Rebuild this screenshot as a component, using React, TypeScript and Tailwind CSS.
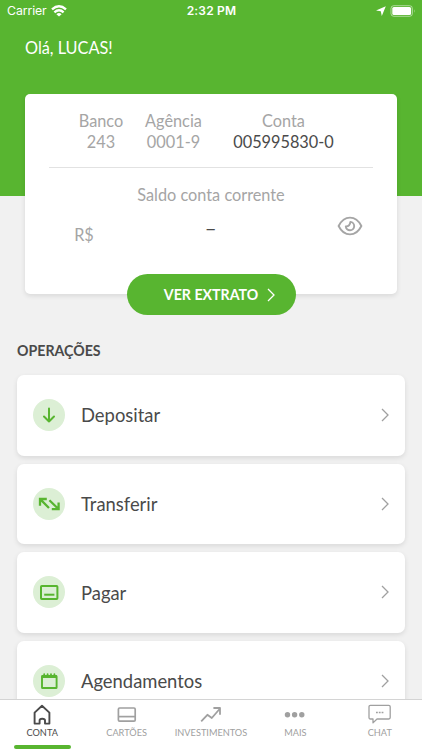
import type { ReactNode } from "react";

const operations: { label: string; icon: ReactNode }[] = [
  {
    label: "Depositar",
    icon: (
      <svg viewBox="0 0 32 32" fill="none" className="w-8 h-8">
        <path
          d="M16 9.5V22.5M11 17.5L16 22.5L21 17.5"
          stroke="currentColor"
          strokeWidth="2"
          strokeLinecap="round"
          strokeLinejoin="round"
        />
      </svg>
    ),
  },
  {
    label: "Transferir",
    icon: (
      <svg viewBox="0 0 32 32" fill="none" className="w-8 h-8">
        <path d="M7 17.8V11H13.8M7.4 11.4L16 20" stroke="currentColor" strokeWidth="2.3" />
        <path d="M25.6 14.4V21.2H18.8M25.2 20.8L16.4 12.2" stroke="currentColor" strokeWidth="2.3" />
      </svg>
    ),
  },
  {
    label: "Pagar",
    icon: (
      <svg viewBox="0 0 32 32" fill="none" className="w-8 h-8">
        <rect x="8" y="10" width="16.4" height="13" rx="0.8" stroke="currentColor" strokeWidth="2" />
        <path d="M11.2 18.7H21.4" stroke="currentColor" strokeWidth="2" />
      </svg>
    ),
  },
  {
    label: "Agendamentos",
    icon: (
      <svg viewBox="0 0 32 32" fill="none" className="w-8 h-8">
        <rect x="9" y="11" width="14.6" height="12" rx="0.6" stroke="currentColor" strokeWidth="1.9" />
        <path d="M8.6 11.6H24" stroke="currentColor" strokeWidth="2.8" />
        <path
          d="M11.2 11V9.2M14.6 11V9.2M18 11V9.2M21.4 11V9.2"
          stroke="currentColor"
          strokeWidth="1.8"
          strokeLinecap="round"
        />
      </svg>
    ),
  },
];

const tabs: { label: string; active?: boolean; icon: ReactNode }[] = [
  {
    label: "CONTA",
    active: true,
    icon: (
      <svg viewBox="0 0 24 24" fill="none" className="w-6 h-6">
        <path
          d="M4.6 9.6L12 2.8L19.4 9.6V20.6H15V17.4Q15 15.8 12.2 15.8Q9.6 15.8 9.6 17.4V20.6H4.6Z"
          stroke="currentColor"
          strokeWidth="1.9"
          strokeLinejoin="round"
        />
      </svg>
    ),
  },
  {
    label: "CARTÕES",
    icon: (
      <svg viewBox="0 0 24 24" fill="none" className="w-6 h-6">
        <rect x="3.4" y="5" width="16.8" height="13.2" rx="1.2" stroke="currentColor" strokeWidth="1.7" />
        <path d="M3.4 13.6H20.2" stroke="currentColor" strokeWidth="1.7" />
      </svg>
    ),
  },
  {
    label: "INVESTIMENTOS",
    icon: (
      <svg viewBox="0 0 24 24" fill="none" className="w-6 h-6">
        <path
          d="M2.2 18.4L8.4 11.8L12.8 15L20.6 6M14.4 5H21V11.8"
          stroke="currentColor"
          strokeWidth="1.8"
          strokeLinejoin="round"
        />
      </svg>
    ),
  },
  {
    label: "MAIS",
    icon: (
      <svg viewBox="0 0 24 24" fill="currentColor" className="w-6 h-6">
        <circle cx="4.5" cy="11.7" r="2.7" />
        <circle cx="11.6" cy="11.7" r="2.7" />
        <circle cx="18.8" cy="11.7" r="2.7" />
      </svg>
    ),
  },
  {
    label: "CHAT",
    icon: (
      <svg viewBox="0 0 24 24" fill="none" className="w-6 h-6">
        <path
          d="M2.4 2.3H20.8Q22.2 2.3 22.2 3.7V14.6Q22.2 16 20.8 16H9L5 19.9V16H2.4Q1 16 1 14.6V3.7Q1 2.3 2.4 2.3Z"
          stroke="currentColor"
          strokeWidth="1.3"
          strokeLinejoin="round"
        />
        <path d="M8 9.5H9.8M10.8 9.5H12.6M13.6 9.5H15.4" stroke="currentColor" strokeWidth="1.3" />
      </svg>
    ),
  },
];

function Chevron({ className }: { className: string }) {
  return (
    <svg viewBox="0 0 8 14" fill="none" className={className}>
      <path d="M1 1L7 7L1 13" stroke="currentColor" strokeWidth="1.3" />
    </svg>
  );
}

function StatusBar() {
  return (
    <div className="grid grid-cols-3 items-center h-[22px] pl-[7px] pr-[6px] font-[Inter,sans-serif] text-xs text-white">
      <div className="flex items-center gap-1">
        <span className="text-[12.3px] tracking-[-0.1px]">Carrier</span>
        <svg viewBox="0 0 16 12" className="w-4 h-3" fill="none" stroke="currentColor" strokeWidth="2.3">
          <path d="M1 4.4Q8 -1.8 15 4.4" />
          <path d="M3.4 7.4Q8 3.2 12.6 7.4" />
          <path d="M8 11.6L5.4 9.2Q8 7 10.6 9.2Z" fill="currentColor" stroke="none" />
        </svg>
      </div>
      <span className="text-center font-semibold tracking-[0.2px]">2:32 PM</span>
      <div className="flex items-center justify-end gap-1">
        <svg viewBox="0 0 10 10" className="w-2.5 h-2.5" fill="currentColor">
          <path d="M9.8 0.2L5.8 9.9L4.8 5.3L0 4.5Z" />
        </svg>
        <svg viewBox="0 0 26 12" className="w-[26px] h-3" fill="none">
          <rect x="1" y="0.7" width="21.4" height="10.6" rx="2.8" stroke="currentColor" strokeOpacity="0.5" />
          <rect x="2.3" y="2" width="18.8" height="8" rx="1.6" fill="currentColor" />
          <path d="M24 4.2Q25.4 6 24 7.8Z" fill="currentColor" fillOpacity="0.5" />
        </svg>
      </div>
    </div>
  );
}

function AccountCard() {
  return (
    <section className="mx-[25px] -mt-[102px] h-[200px] shrink-0 rounded-[5px] bg-white shadow-[0_2px_5px_rgba(0,0,0,0.1)] text-center text-[16.3px] text-[#a5a5a5]">
      <div className="flex ml-6 mr-6 h-[74px] pt-4 pl-6 border-b border-[#e2e2e2] leading-[21px]">
        <div className="w-14">
          <p>Banco</p>
          <p>243</p>
        </div>
        <div className="w-[89px]">
          <p>Agência</p>
          <p>0001-9</p>
        </div>
        <div className="w-[131px]">
          <p>Conta</p>
          <p className="text-[#4a4a4a]">005995830-0</p>
        </div>
      </div>
      <p className="pt-4 leading-[22px]">Saldo conta corrente</p>
      <div className="grid grid-cols-3 h-10">
        <span className="pt-[19px] pr-[6px] leading-5">R$</span>
        <span className="pt-[13px] leading-5 text-[#4a4a4a]">
          <span className="inline-block scale-x-125">–</span>
        </span>
        <span className="flex justify-end pt-2 pr-[34px]">
          <svg viewBox="0 0 26 24" fill="none" className="w-[26px] h-6">
            <path
              d="M1.6 12Q5.8 3.6 13 3.6T24.4 12Q20.2 20.4 13 20.4T1.6 12Z"
              stroke="currentColor"
              strokeWidth="1.9"
              strokeLinejoin="round"
            />
            <path
              d="M13.4 7.9A4.2 4.2 0 1 1 8.8 12.4Q12.9 12.6 13.4 7.9Z"
              stroke="currentColor"
              strokeWidth="1.9"
              strokeLinejoin="round"
            />
          </svg>
        </span>
      </div>
    </section>
  );
}

export default function App() {
  return (
    <div className="flex flex-col w-[422px] h-[750px] overflow-hidden bg-[#f1f1f1] font-[Lato,sans-serif] text-[#4a4a4a]">
      <header className="h-[196px] shrink-0 bg-[#58b530]">
        <StatusBar />
        <h1 className="pt-[15px] pl-[25px] text-[16.3px] leading-[22px] text-white">Olá, LUCAS!</h1>
      </header>

      <main className="flex flex-col flex-1 min-h-0 overflow-hidden -mt-[102px] pt-[102px]">
        <AccountCard />

        <button className="relative flex items-center justify-center gap-[9px] self-center w-[169px] h-[41px] -mt-5 pl-[17px] shrink-0 rounded-full bg-[#58b530] text-[14.2px] font-bold text-white">
          VER EXTRATO
          <Chevron className="w-2 h-[14px]" />
        </button>

        <h2 className="mt-[26px] ml-[17px] mb-[14px] text-[14.2px] leading-5 font-bold">OPERAÇÕES</h2>

        <div className="flex flex-col gap-2 mx-[17px]">
          {operations.map((op) => (
            <div
              key={op.label}
              className="flex items-center h-[80.6px] shrink-0 pl-4 pr-4 rounded-[7px] bg-white shadow-[0_2px_5px_rgba(0,0,0,0.1)]"
            >
              <span className="w-8 h-8 mr-4 rounded-full bg-[#dcefd5] text-[#58b530]">{op.icon}</span>
              <span className="flex-1 pt-0.5 text-[18.4px]">{op.label}</span>
              <Chevron className="w-2 h-[14px] text-[#a0a0a0]" />
            </div>
          ))}
        </div>
      </main>

      <nav className="grid grid-cols-5 h-[51px] shrink-0 border-t border-[#d4d4d4] bg-white">
        {tabs.map((tab) => (
          <div
            key={tab.label}
            className={`flex flex-col items-center pt-[3px] text-[9.2px] ${tab.active ? "text-[#4a4a4a]" : "text-[#a0a0a0]"}`}
          >
            {tab.icon}
            <span className="leading-[11px]">{tab.label}</span>
            {tab.active && <span className="w-[57px] h-1 mt-[7px] rounded-full bg-[#58b530]" />}
          </div>
        ))}
      </nav>
    </div>
  );
}
